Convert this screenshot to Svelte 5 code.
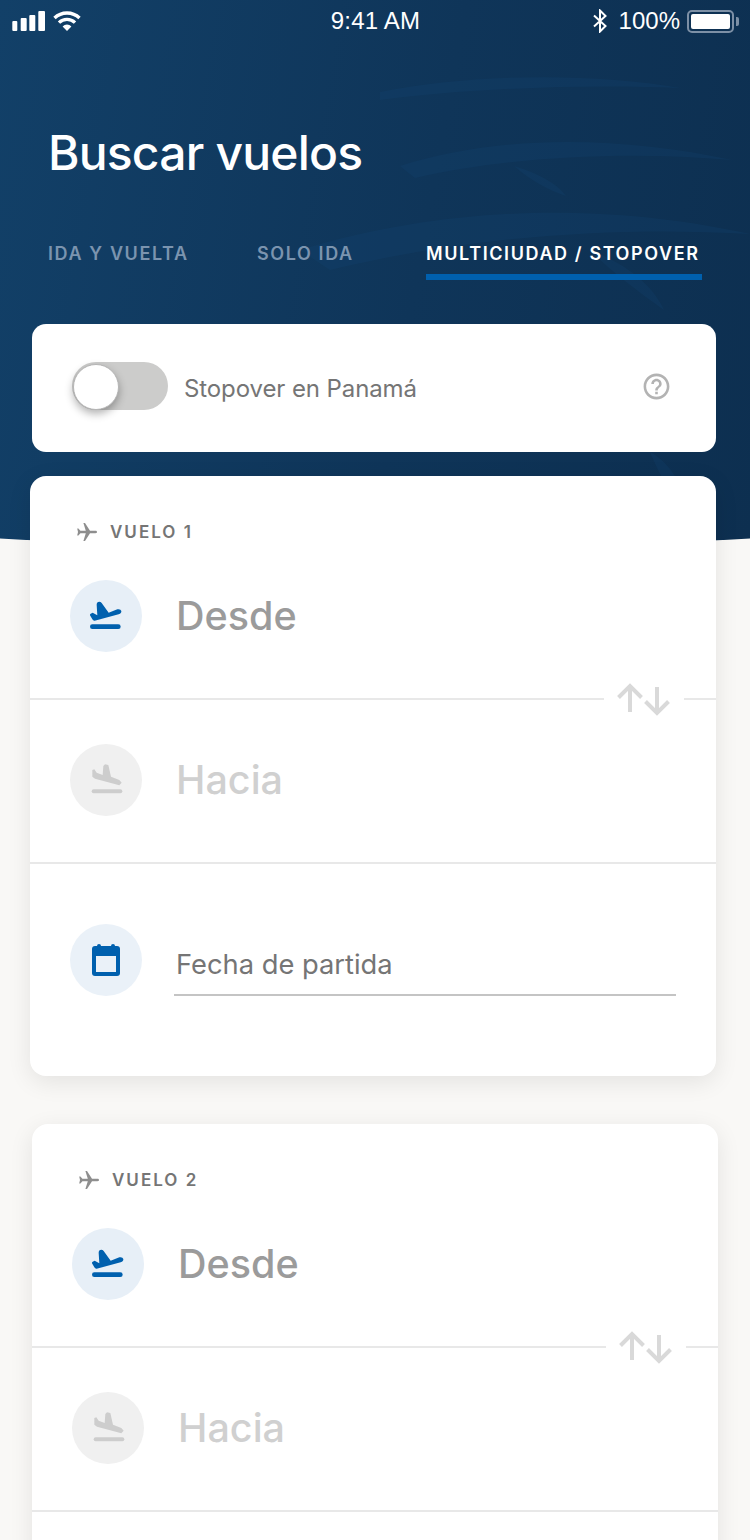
<script>
  const flights = [1, 2];
  const tabs = [
    { label: 'IDA Y VUELTA', active: false },
    { label: 'SOLO IDA', active: false },
    { label: 'MULTICIUDAD / STOPOVER', active: true }
  ];
</script>

<div class="screen">
  <header class="hero">
    <svg class="swoosh" viewBox="0 0 750 549" preserveAspectRatio="none" aria-hidden="true">
      <path d="M380 92C470 74 590 72 680 88C590 84 470 88 380 100Z" />
      <path d="M400 166C500 134 620 136 732 160C620 150 500 158 415 178Z" />
      <path d="M514 166C534 172 556 182 566 196C548 190 530 180 514 166Z" />
      <path d="M300 250C480 196 640 210 750 234C620 226 470 236 330 270Z" />
      <path d="M590 250C620 262 650 280 664 310C636 290 612 272 590 250Z" />
      <path d="M650 452C668 462 682 480 692 520C676 506 662 480 650 452Z" />
    </svg>

    <div class="status">
      <div class="status-left">
        <svg width="34" height="20" viewBox="0 0 34 20" fill="#fff">
          <rect x="0.3" y="10" width="5" height="10" rx="1" />
          <rect x="8.7" y="7" width="6" height="13" rx="1" />
          <rect x="17.3" y="4" width="6" height="16" rx="1" />
          <rect x="26.3" y="0" width="6.7" height="20" rx="1" />
        </svg>
        <svg width="28" height="20" viewBox="0 0 28 20">
          <g fill="none" stroke="#fff" stroke-width="3.4">
            <path d="M1.5 7A18 18 0 0 1 26.5 7" />
            <path d="M6 11.6A11.5 11.5 0 0 1 22 11.6" />
          </g>
          <path fill="#fff" d="M14 20L9.6 15.4A6.2 6.2 0 0 1 18.4 15.4Z" />
        </svg>
      </div>
      <span class="clock">9:41 AM</span>
      <div class="status-right">
        <svg width="14" height="24" viewBox="0 0 14 24" fill="none" stroke="#fff" stroke-width="2">
          <path d="M1 6.5L12.5 17L7 22.5V1.5L12.5 7L1 17.5" />
        </svg>
        <span>100%</span>
        <div class="battery"><div class="battery-fill"></div></div>
      </div>
    </div>

    <h1>Buscar vuelos</h1>

    <nav class="tabs">
      {#each tabs as tab}
        <span class="tab" class:active={tab.active}>{tab.label}</span>
      {/each}
    </nav>

    <section class="stopover">
      <div class="switch"><div class="knob"></div></div>
      <span class="stopover-label">Stopover en Panamá</span>
      <svg class="help" width="31" height="31" viewBox="0 0 24 24" fill="#b3b3b3">
        <path d="M11 18h2v-2h-2v2zm1-16C6.48 2 2 6.48 2 12s4.48 10 10 10 10-4.48 10-10S17.52 2 12 2zm0 18c-4.41 0-8-3.59-8-8s3.59-8 8-8 8 3.59 8 8-3.59 8-8 8zm0-14c-2.21 0-4 1.79-4 4h2c0-1.1.9-2 2-2s2 .9 2 2c0 2-3 1.75-3 5h2c0-2.25 3-2.5 3-5 0-2.21-1.79-4-4-4z" />
      </svg>
    </section>
  </header>

  {#each flights as n}
    <section class="card" class:first={n === 1}>
      <div class="flight-tag">
        <svg width="24" height="24" viewBox="0 0 24 24" fill="#8e8e8e">
          <path d="M22 12c0-.8-.7-1.2-1.5-1.2H15L10 3H8.4l2.4 7.8H5.4L3.4 8.5H2.2l.8 3.5-.8 3.5h1.2l2-2.3h5.4L8.4 21H10l5-7.8h5.5c.8 0 1.5-.4 1.5-1.2z" />
        </svg>
        <span>VUELO {n}</span>
      </div>

      <div class="row split">
        <div class="bubble">
          <svg width="38" height="38" viewBox="81 81 114 114" fill="#0060ae">
            <path d="M92 131L98 128L112 136L110 104Q110 95 118 95Q122 95 125 99L146 128L172 118Q182 116 184 123Q185 130 176 133L104 152Q100 153 97 148L90 136Q89 133 92 131Z" />
            <rect x="90" y="163" width="92" height="14" rx="7" />
          </svg>
        </div>
        <span class="place">Desde</span>
        <div class="swap">
          <svg width="56" height="34" viewBox="0 0 56 34" fill="none" stroke="#d9d9d9" stroke-width="4">
            <path d="M14 30V4M2.5 15.5L14 4L25.5 15.5" />
            <path d="M41 5V31M29.5 19.5L41 31L52.5 19.5" />
          </svg>
        </div>
      </div>

      <div class="row">
        <div class="bubble muted">
          <svg width="38" height="38" viewBox="111 93 114 114" fill="#cdcdcd">
            <path d="M165 103L175 105L183 140L208 150L215 158L208 166L135 146L127 140V120L133 118L140 128L158 135L160 108Z" />
            <rect x="125" y="178" width="92" height="12" rx="6" />
          </svg>
        </div>
        <span class="place muted-text">Hacia</span>
      </div>

      {#if n === 1}
        <div class="row date">
          <div class="bubble calendar">
            <svg width="28" height="32" viewBox="0 0 28 32">
              <rect x="0" y="2" width="28" height="30" rx="3" fill="#0060ae" />
              <rect x="5" y="0" width="4" height="5" rx="2" fill="#0060ae" />
              <rect x="19" y="0" width="4" height="5" rx="2" fill="#0060ae" />
              <rect x="4" y="12" width="20" height="16" fill="#eaf1f8" />
            </svg>
          </div>
          <div class="date-field">Fecha de partida</div>
        </div>
      {/if}
    </section>
  {/each}
</div>

<style>
  :global(body) {
    margin: 0;
    background: #f9f8f6;
  }

  .screen {
    height: 1540px;
    overflow: hidden;
    position: relative;
    background: #f9f8f6;
    font-family: Inter, "Noto Sans", sans-serif;
  }

  .hero {
    position: relative;
    height: 549px;
    box-sizing: border-box;
    padding-top: 1px;
    color: #fff;
    background: linear-gradient(100deg, #124068 0%, #0f3559 55%, #0d2f50 100%);
    clip-path: circle(6750px at 50% calc(100% - 6750px));
  }

  .swoosh {
    position: absolute;
    inset: 0;
    width: 100%;
    height: 100%;
    fill: #14497a;
    opacity: 0.2;
  }

  .status {
    position: relative;
    display: grid;
    grid-template-columns: 1fr auto 1fr;
    align-items: center;
    height: 40px;
    padding: 0 11px 0 12px;
    font-family: "Liberation Sans", Arial, sans-serif;
    font-size: 24px;
  }

  .status-left {
    display: flex;
    align-items: center;
    gap: 7px;
  }

  .status-right {
    display: flex;
    align-items: center;
    justify-content: flex-end;
    gap: 12px;
  }

  .clock {
    letter-spacing: 0.2px;
  }

  .battery {
    position: relative;
    width: 47px;
    height: 23px;
    box-sizing: border-box;
    padding: 2px;
    margin-right: 5px;
    margin-left: -5px;
    border: 2px solid #7d90a6;
    border-radius: 5px;
  }

  .battery::after {
    content: '';
    position: absolute;
    right: -7px;
    top: 5px;
    width: 3px;
    height: 9px;
    background: #7d90a6;
    border-radius: 0 2px 2px 0;
  }

  .battery-fill {
    height: 100%;
    background: #fff;
    border-radius: 2px;
  }

  h1 {
    position: relative;
    margin: 82px 0 0 48px;
    font-size: 48px;
    line-height: 60px;
    font-weight: 500;
    letter-spacing: -0.8px;
  }

  .tabs {
    position: relative;
    display: grid;
    grid-template-columns: 209px 169px 276px;
    margin: 59px 0 0 48px;
  }

  .tab {
    padding-bottom: 8px;
    border-bottom: 6px solid transparent;
    font-size: 18px;
    line-height: 24px;
    font-weight: 600;
    letter-spacing: 1.6px;
    white-space: nowrap;
    color: #7b94af;
  }

  .tab.active {
    color: #fff;
    border-bottom-color: #0060ae;
  }

  .stopover {
    position: relative;
    display: flex;
    align-items: center;
    height: 128px;
    box-sizing: border-box;
    margin: 44px 34px 0 32px;
    padding: 0 44px 0 40px;
    background: #fff;
    border-radius: 14px;
  }

  .switch {
    position: relative;
    width: 96px;
    height: 48px;
    margin-top: -4px;
    flex-shrink: 0;
    background: #cccccb;
    border-radius: 24px;
  }

  .knob {
    position: absolute;
    left: 1px;
    top: 2px;
    width: 44px;
    height: 44px;
    background: #fff;
    border: 1px solid #b5b5b5;
    border-radius: 50%;
    box-shadow: 0 4px 8px rgba(0, 0, 0, 0.3);
  }

  .stopover-label {
    flex: 1;
    margin-left: 16px;
    font-size: 24px;
    letter-spacing: -0.1px;
    color: #757575;
  }

  .help {
    margin-top: -4px;
  }

  .card {
    position: relative;
    width: 686px;
    height: 600px;
    box-sizing: border-box;
    margin: 0 0 48px 32px;
    padding-top: 45px;
    background: #fff;
    border-radius: 16px;
    box-shadow: 0 6px 24px rgba(0, 0, 0, 0.09);
  }

  .card.first {
    margin-top: -73px;
    margin-left: 30px;
  }

  .flight-tag {
    display: flex;
    align-items: center;
    gap: 11px;
    height: 22px;
    padding-left: 45px;
    font-size: 17px;
    font-weight: 600;
    letter-spacing: 2px;
    color: #757575;
  }

  .row {
    position: relative;
    display: flex;
    align-items: center;
    height: 164px;
    box-sizing: border-box;
    padding: 0 40px 2px;
    border-bottom: 2px solid #e8e8e8;
  }

  .split {
    height: 157px;
    padding-bottom: 9px;
  }

  .bubble {
    display: flex;
    align-items: center;
    justify-content: center;
    width: 72px;
    height: 72px;
    flex-shrink: 0;
    background: #e7eff7;
    border-radius: 50%;
  }

  .bubble.muted {
    background: #f0f0f0;
  }

  .bubble.calendar {
    background: #eaf1f8;
  }

  .place {
    margin-left: 34px;
    font-size: 39.5px;
    font-weight: 500;
    color: #9b9b9b;
  }

  .place.muted-text {
    color: #d0d0d0;
  }

  .swap {
    position: absolute;
    right: 32px;
    bottom: -18px;
    display: flex;
    justify-content: center;
    width: 80px;
    background: #fff;
  }

  .date {
    height: 200px;
    align-items: flex-start;
    border-bottom: 0;
    padding-top: 60px;
  }

  .date-field {
    width: 502px;
    height: 72px;
    box-sizing: border-box;
    margin-left: 32px;
    padding: 24px 0 0 2px;
    border-bottom: 2px solid #c4c4c4;
    font-size: 27.3px;
    color: #757575;
  }
</style>
